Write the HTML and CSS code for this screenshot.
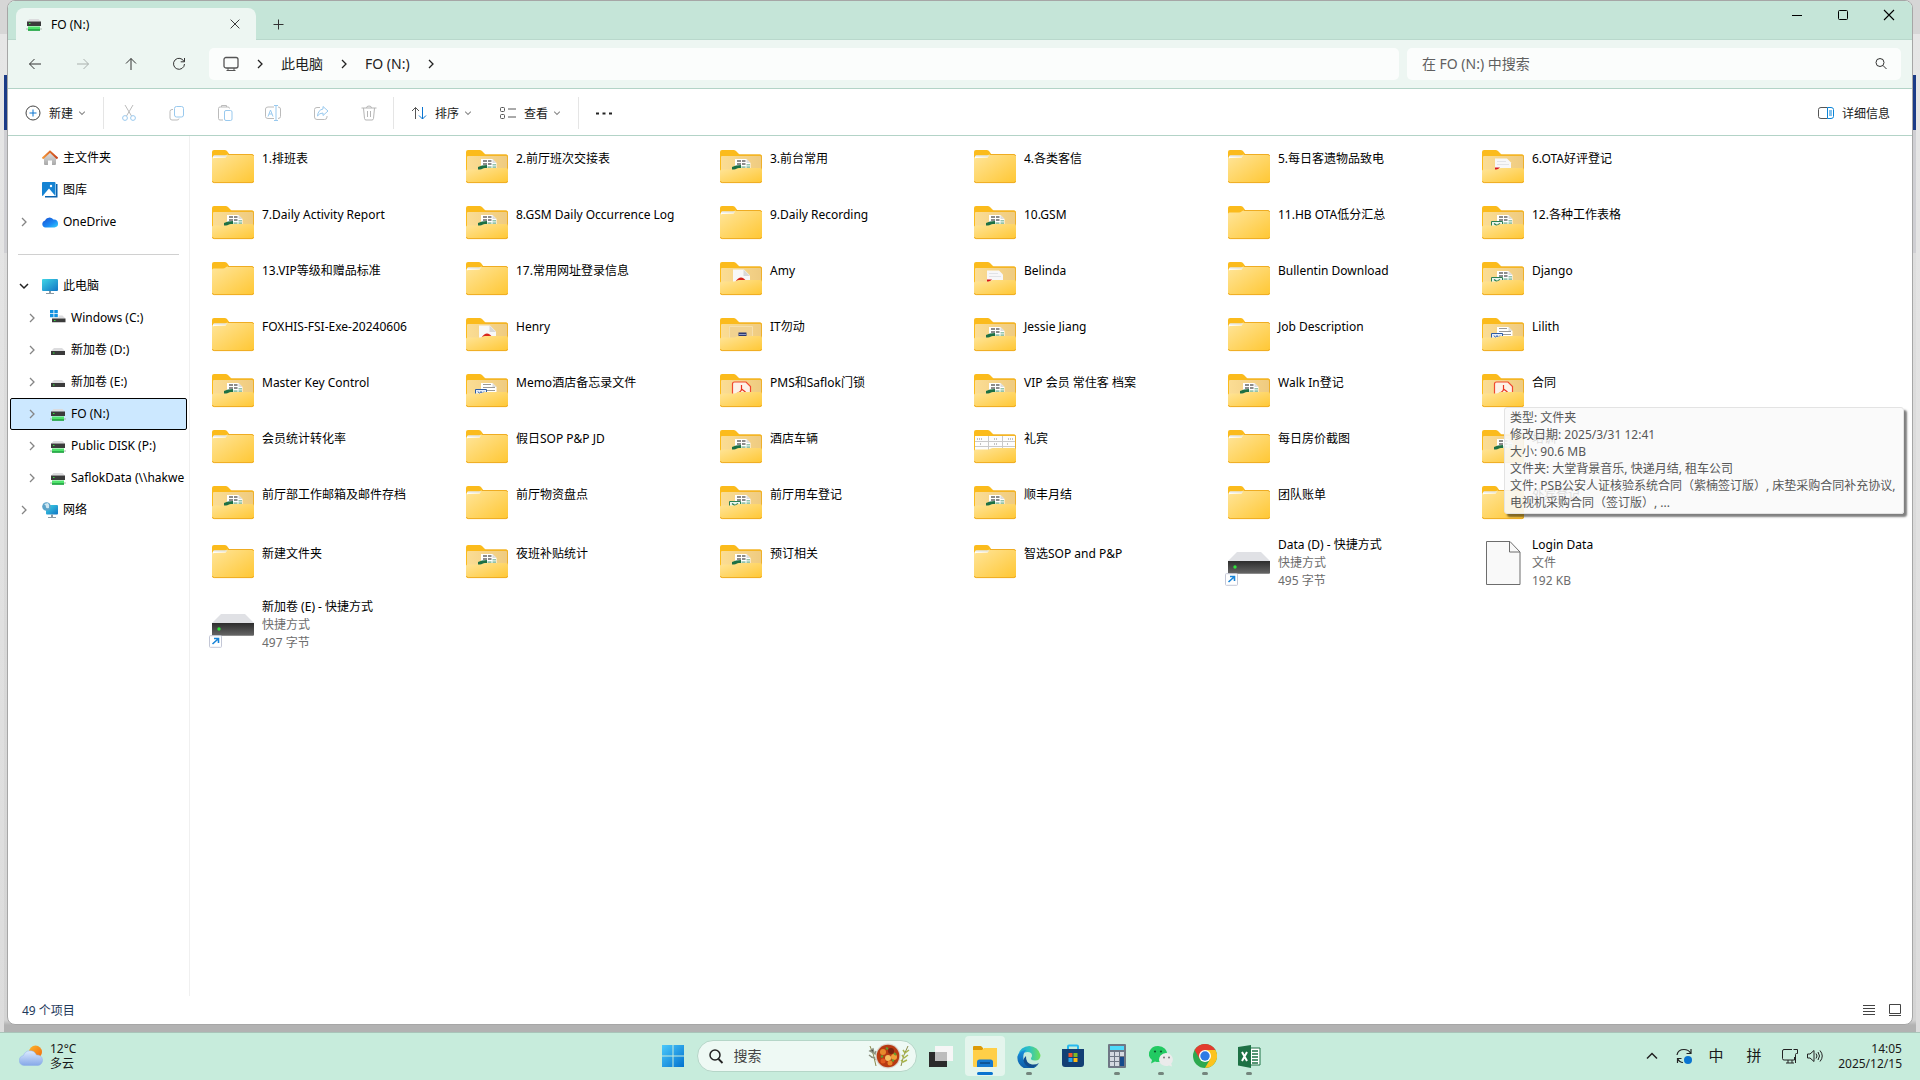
FILE: index.html
```html
<!DOCTYPE html>
<html lang="zh-CN">
<head>
    <meta charset="UTF-8">
    <meta name="viewport" content="width=device-width, initial-scale=1.0">
    <title>FO (N:)</title>
    <link rel="stylesheet" href="styles.css">
</head>
<body>

<!-- Shared icons -->
<svg class="sprite" width="0" height="0" aria-hidden="true">
    <defs>
        <linearGradient id="g-front" x1="0" y1="0" x2="1" y2="1">
            <stop offset="0" stop-color="#ffe59a"/>
            <stop offset="1" stop-color="#ffc733"/>
        </linearGradient>
        <linearGradient id="g-back" x1="0" y1="0" x2="1" y2="0">
            <stop offset="0" stop-color="#fbdd94"/>
            <stop offset="1" stop-color="#efcb80"/>
        </linearGradient>
        <linearGradient id="g-paper" x1="0" y1="0" x2="1" y2="0">
            <stop offset="0" stop-color="#ffffff"/>
            <stop offset="1" stop-color="#ffeec0"/>
        </linearGradient>
        <linearGradient id="g-drive" x1="0" y1="0" x2="0" y2="1">
            <stop offset="0" stop-color="#2d2d2d"/>
            <stop offset="1" stop-color="#666666"/>
        </linearGradient>
        <linearGradient id="g-roof" x1="0" y1="0" x2="1" y2="0">
            <stop offset="0" stop-color="#f59a3c"/>
            <stop offset="1" stop-color="#c8421c"/>
        </linearGradient>
        <linearGradient id="g-wall" x1="0" y1="0" x2="0" y2="1">
            <stop offset="0" stop-color="#e4e4e4"/>
            <stop offset="1" stop-color="#a8a8a8"/>
        </linearGradient>
        <linearGradient id="g-cloud" x1="0" y1="0" x2="1" y2="1">
            <stop offset="0" stop-color="#1a4fd0"/>
            <stop offset="0.6" stop-color="#1b8bf5"/>
            <stop offset="1" stop-color="#35d2fb"/>
        </linearGradient>
        <linearGradient id="g-screen" x1="0" y1="0" x2="1" y2="1">
            <stop offset="0" stop-color="#3fd6e6"/>
            <stop offset="1" stop-color="#1174c4"/>
        </linearGradient>
        <linearGradient id="g-win" x1="0" y1="0" x2="1" y2="1">
            <stop offset="0" stop-color="#4cc9fb"/>
            <stop offset="1" stop-color="#0272cf"/>
        </linearGradient>
        <linearGradient id="g-weather" x1="0" y1="0" x2="0" y2="1">
            <stop offset="0" stop-color="#dcebff"/>
            <stop offset="1" stop-color="#86a8e8"/>
        </linearGradient>
        <linearGradient id="g-sun" x1="0" y1="0" x2="1" y2="1">
            <stop offset="0" stop-color="#fbb62c"/>
            <stop offset="1" stop-color="#f2680d"/>
        </linearGradient>
        <linearGradient id="g-edge" x1="0" y1="0" x2="1" y2="0">
            <stop offset="0" stop-color="#1aa7e0"/>
            <stop offset="0.5" stop-color="#2fc3c0"/>
            <stop offset="1" stop-color="#6fe05a"/>
        </linearGradient>
        <linearGradient id="g-edge2" x1="0" y1="0" x2="0" y2="1">
            <stop offset="0" stop-color="#1a90dd"/>
            <stop offset="1" stop-color="#0c59a4"/>
        </linearGradient>
    </defs>

    <!-- folder parts -->
    <symbol id="folder-back" viewBox="0 0 48 48">
        <path d="M3 30V9q0-2 2-2h11.500q1.500 0 2.500 1l3.500 3.500H43q2 0 2 2V30z" fill="#fbbb1c"/>
        <path d="M4 30V14q0-1 1-1h38q1 0 1 1v16z" fill="url(#g-back)"/>
        <path d="M22 12h21q1.500 0 1.500 1.500V28" fill="none" stroke="#eeb02c"/>
    </symbol>
    <symbol id="folder-front" viewBox="0 0 48 48">
        <path d="M3 28q0-1.500 1.500-1.500H17q1.500 0 2.500-.8t2.500-.8h21q2 0 2 2V38q0 2-2 2H5q-2 0-2-2z" fill="url(#g-front)"/>
        <path d="M3.500 38q0 1.600 1.700 1.600h37.600q1.700 0 1.700-1.600" fill="none" stroke="#efac22"/>
    </symbol>
    <symbol id="f-empty" viewBox="0 0 48 48">
        <path d="M3 16V9q0-2 2-2h10.500q1.500 0 2.500 1l2.500 3.500L17 14z" fill="#fbbb1c"/>
        <path d="M3 15q0-1.500 1.500-1.500H14q1.500 0 2.500-1t2.500-1h24q2 0 2 2V38q0 2-2 2H5q-2 0-2-2z" fill="url(#g-front)"/>
        <path d="M19 11.500h24q1.500 0 1.500 1.500M3.500 38q0 1.600 1.700 1.600h37.600q1.700 0 1.700-1.600" fill="none" stroke="#efac22"/>
    </symbol>
    <symbol id="f-plain" viewBox="0 0 48 48">
        <use href="#f-empty"/>
        <path d="M4 14q0-1.500 1.500-1.500H18l-1.500 2.500H5q-1 0-1 1z" fill="url(#g-paper)"/>
        <path d="M4.500 13h13" stroke="#d8e2ee"/>
    </symbol>
    <symbol id="sheet" viewBox="0 0 48 48">
        <path d="M18 16h11.500l4 4V28H18z" fill="#fff"/>
        <path d="M29.500 16v4h4z" fill="#ddd"/>
        <path d="M20 17h4v2h-4zM25 17h3.500v2H25zM20 20h4v2h-4zM25 20h3.500v2H25z" fill="#8c8c8c"/>
        <path d="M29.500 21H33v1.500h-3.500zM24.500 23.200h4v2h-4zM29.500 23.200H33v2h-3.500z" fill="#93c3ab"/>
    </symbol>
    <symbol id="f-xls" viewBox="0 0 48 48">
        <use href="#folder-back"/><use href="#sheet"/>
        <path d="M15 24l4-1.500 5-.5v6h-9z" fill="#1d7044"/>
        <use href="#folder-front"/>
    </symbol>
    <symbol id="f-sheet" viewBox="0 0 48 48">
        <use href="#folder-back"/><use href="#sheet"/>
        <path d="M12.500 22.500h11v6h-11z" fill="#e9f5ee" stroke="#2b8054"/>
        <path d="M15 24.500l3 2 3-2" fill="none" stroke="#2b8054" stroke-width="1.500"/>
        <use href="#folder-front"/>
    </symbol>
    <symbol id="f-doc" viewBox="0 0 48 48">
        <use href="#folder-back"/>
        <path d="M18 16h11.500l4 4V28H18z" fill="#fff"/>
        <path d="M29.500 16v4h4z" fill="#ddd"/>
        <path d="M20 17.500h8M20 20.500h12M24 23.500h8" stroke="#9a9a9a"/>
        <path d="M12.500 22.500h11v6h-11z" fill="#e6eef9" stroke="#2c5ba6"/>
        <path d="M15 24.500l1.500 2 1.500-2 1.500 2 1.500-2" fill="none" stroke="#2c5ba6"/>
        <use href="#folder-front"/>
    </symbol>
    <symbol id="f-pdf" viewBox="0 0 48 48">
        <use href="#folder-back"/>
        <path d="M16 14.500h11l6 6V28H16z" fill="#f8f8f8"/>
        <path d="M26.500 14.500V21H33z" fill="#d8d8d8"/>
        <path d="M18.500 26.500q5.500-8 11 0z" fill="#d8261c"/>
        <use href="#folder-front"/>
    </symbol>
    <symbol id="f-page" viewBox="0 0 48 48">
        <use href="#folder-back"/>
        <path d="M16 15.500h12l4 4V28H16z" fill="#f7f7f9"/>
        <path d="M18 18.500h9M18 21.500h12" stroke="#e1e3e8"/>
        <path d="M16 24.500h5l-3 3h-2z" fill="#d8141c"/>
        <use href="#folder-front"/>
    </symbol>
    <symbol id="f-acrobat" viewBox="0 0 48 48">
        <use href="#folder-back"/>
        <path d="M15.500 30V17q0-2 2-2H29l4.500 4.500V30z" fill="#fdf1e8" stroke="#f0492f" stroke-width="1.200"/>
        <path d="M24.500 18v4q0 2.500-4 4M24.500 22l4 3" fill="none" stroke="#e8331d" stroke-width="1.200"/>
        <use href="#folder-front"/>
    </symbol>
    <symbol id="f-app" viewBox="0 0 48 48">
        <use href="#folder-back"/>
        <path d="M12.500 15.500h23V28h-23z" fill="#f1d290" stroke="#f6dfab"/>
        <path d="M21.500 21.500h8v5h-8z" fill="#2b3a72"/>
        <path d="M22 23.500h7" stroke="#8f9ac4"/>
        <use href="#folder-front"/>
    </symbol>
    <symbol id="f-table" viewBox="0 0 48 48">
        <use href="#folder-back"/>
        <path d="M4 13h40v16H4z" fill="#fdfdfd"/>
        <path d="M4 18.500h40M4 23.500h40M17.500 13v14M31.500 13v12" stroke="#c9c9c9"/>
        <path d="M6 16h5M23 16h3M37 16h5M9 21h2M23 21h4M36 21h2" stroke="#888" stroke-dasharray="1 1"/>
        <use href="#folder-front"/>
    </symbol>
    <symbol id="file-blank" viewBox="0 0 48 48">
        <path d="M7.500 3.500H31L41 14v32.500H7.500z" fill="#f9f9f9" stroke="#6d6d6d"/>
        <path d="M30.500 3.500V14H41" fill="none" stroke="#6d6d6d"/>
    </symbol>
    <symbol id="drive-link" viewBox="0 0 48 48">
        <path d="M12 14h24l9 9H3z" fill="#e0e1e5"/>
        <path d="M3 23h42v12q0 .8-1 .8H4q-1 0-1-.8z" fill="url(#g-drive)"/>
        <circle cx="10" cy="29" r="1.700" fill="#2fe23a"/>
        <path d="M.5 36.500q0-.8.800-.8h10.400q.8 0 .8.800v10q0 .8-.8.800H1.300q-.8 0-.8-.8z" fill="#fff" stroke="#c3c7d6"/>
        <path d="M3.500 44l5.500-5M5 38.500h4.500V43" fill="none" stroke="#1784d8" stroke-width="1.600"/>
    </symbol>

    <!-- small drives -->
    <symbol id="drive" viewBox="0 0 16 16">
        <path d="M4 6h8l3 3H1z" fill="#dcdcde"/>
        <path d="M1 9h14v4H1z" fill="#3b3b3b"/>
        <path d="M3 11h1.500" stroke="#33e23d"/>
    </symbol>
    <symbol id="drive-net" viewBox="0 0 16 16">
        <path d="M3.500 3h9l2.500 2.500H1z" fill="#dcdcde"/>
        <path d="M1 5.500h14v4.500H1z" fill="#3b3b3b"/>
        <path d="M3 7.500h1.500" stroke="#33e23d"/>
        <path d="M2 10.500h12v4H2z" fill="#4fe36b"/>
        <path d="M2 14h12" stroke="#1f9c40" stroke-width="1.500"/>
        <path d="M0 13h2M14 13h2" stroke="#a9b8ad"/>
    </symbol>
    <symbol id="drive-win" viewBox="0 0 16 16">
        <path d="M0 0h3.500v3.300H0zM4.300 0h3.500v3.300H4.300zM0 4h3.500v3.300H0zM4.300 4h3.500v3.300H4.300z" fill="#1090e0"/>
        <path d="M8.500 5.500h4l3 3H2l1-1h5.500z" fill="#dcdcde"/>
        <path d="M2 8.500h13.500v3.800H2z" fill="#3b3b3b"/>
        <path d="M4 10.500h1.500" stroke="#33e23d"/>
    </symbol>

    <!-- chevrons -->
    <symbol id="chev-right" viewBox="0 0 14 14">
        <path d="M5 3l4 4-4 4" fill="none" stroke="currentColor" stroke-width="1.300"/>
    </symbol>
    <symbol id="chev-down" viewBox="0 0 14 14">
        <path d="M3 5l4 4 4-4" fill="none" stroke="currentColor" stroke-width="1.500"/>
    </symbol>
    <symbol id="cross" viewBox="0 0 16 16">
        <path d="M3 3l10 10M13 3L3 13" fill="none" stroke="currentColor" stroke-width="1.100"/>
    </symbol>
    <symbol id="magnifier" viewBox="0 0 16 16">
        <circle cx="7" cy="6.500" r="4" fill="none" stroke="currentColor"/>
        <path d="M10 9.500l3.500 3.500" stroke="currentColor"/>
    </symbol>
</svg>

<div class="desktop">
    <main class="window">

        <!-- Tabs -->
        <header class="titlebar">
            <div class="tab">
                <svg class="icon16"><use href="#drive-net"/></svg>
                <span class="tab-title">FO (N:)</span>
                <button class="icon-btn" aria-label="关闭标签页"><svg class="icon14"><use href="#cross"/></svg></button>
            </div>
            <button class="icon-btn new-tab" aria-label="新建标签页">
                <svg class="icon16" viewBox="0 0 16 16"><path d="M8.500 3.500v10M3.500 8.500h10" stroke="#333"/></svg>
            </button>
            <div class="window-buttons">
                <button aria-label="最小化"><svg class="icon16" viewBox="0 0 16 16"><path d="M3 8.500h10" stroke="#000"/></svg></button>
                <button aria-label="最大化"><svg class="icon16" viewBox="0 0 16 16"><rect x="3.500" y="3.500" width="9" height="9" rx="1" fill="none" stroke="#000"/></svg></button>
                <button aria-label="关闭"><svg class="icon16"><use href="#cross"/></svg></button>
            </div>
        </header>

        <!-- Navigation -->
        <nav class="navbar">
            <button class="nav-btn" aria-label="后退"><svg class="icon16" viewBox="0 0 16 16"><path d="M14 8H2.500M7.500 3l-5 5 5 5" fill="none" stroke="#333"/></svg></button>
            <button class="nav-btn" aria-label="前进" disabled><svg class="icon16" viewBox="0 0 16 16"><path d="M2 8h11.500M8.500 3l5 5-5 5" fill="none" stroke="#a9b0ad"/></svg></button>
            <button class="nav-btn" aria-label="上移"><svg class="icon16" viewBox="0 0 16 16"><path d="M8 14V2.500M3 7.500l5-5 5 5" fill="none" stroke="#333"/></svg></button>
            <button class="nav-btn" aria-label="刷新"><svg class="icon16" viewBox="0 0 16 16"><path d="M13 5.500A5.500 5.500 0 1 0 13.500 8M13.500 2v3.800H9.700" fill="none" stroke="#333"/></svg></button>
            <div class="address">
                <svg class="icon16" viewBox="0 0 16 16"><rect x="1" y="1.500" width="14" height="10.500" rx="2" fill="none" stroke="#555" stroke-width="1.300"/><path d="M5 12v2.500M11 12v2.500M3.500 14.500h9" stroke="#555"/></svg>
                <svg class="icon14"><use href="#chev-right"/></svg>
                <button class="crumb">此电脑</button>
                <svg class="icon14"><use href="#chev-right"/></svg>
                <button class="crumb">FO (N:)</button>
                <svg class="icon14"><use href="#chev-right"/></svg>
            </div>
            <div class="search">
                <input type="text" placeholder="在 FO (N:) 中搜索" aria-label="搜索">
                <svg class="icon16"><use href="#magnifier"/></svg>
            </div>
        </nav>

        <!-- Commands -->
        <div class="toolbar">
            <button class="cmd">
                <svg class="icon16" viewBox="0 0 16 16"><circle cx="8" cy="8" r="7" fill="none" stroke="#444"/><path d="M8 4.500v7M4.500 8h7" stroke="#0a74d0"/></svg>
                新建
                <svg class="caret"><use href="#chev-down"/></svg>
            </button>
            <span class="divider"></span>
            <button class="cmd-icon" aria-label="剪切" disabled><svg class="icon16" viewBox="0 0 16 16"><path d="M4 0l6.500 11M12 0L5.500 11" fill="none" stroke="#bbb"/><circle cx="4" cy="13" r="2.400" fill="none" stroke="#99c9ee"/><circle cx="12" cy="13" r="2.400" fill="none" stroke="#99c9ee"/></svg></button>
            <button class="cmd-icon" aria-label="复制" disabled><svg class="icon16" viewBox="0 0 16 16"><path d="M4 4.500H3q-2 0-2 2V13q0 2 2 2h5q2 0 2-1.500" fill="none" stroke="#bbb"/><rect x="5.500" y="1.500" width="9" height="10.500" rx="2" fill="none" stroke="#99c9ee"/></svg></button>
            <button class="cmd-icon" aria-label="粘贴" disabled><svg class="icon16" viewBox="0 0 16 16"><path d="M6 15H3q-1.500 0-1.500-1.500v-10Q1.500 2 3 2h8q1.500 0 1.500 1.500M4.500 2V.5h5V2" fill="none" stroke="#bbb"/><rect x="7.500" y="5.500" width="7.500" height="10" rx="1.500" fill="none" stroke="#99c9ee"/></svg></button>
            <button class="cmd-icon" aria-label="重命名" disabled><svg class="icon16" viewBox="0 0 16 16"><path d="M9 2H3Q.5 2 .5 4v7.500q0 2 2.500 2h6M13 2q2.500 0 2.500 2v7.500q0 2-2.500 2" fill="none" stroke="#bbb"/><path d="M11 .5v15M9 .5h4M9 15.500h4M3 11.500L5.500 5 8 11.500M4 9h3" fill="none" stroke="#99c9ee"/></svg></button>
            <button class="cmd-icon" aria-label="共享" disabled><svg class="icon16" viewBox="0 0 16 16"><path d="M7 2.500H4q-2.500 0-2.500 2V12q0 2.500 2.500 2.500h7.500q2.500 0 2.500-2.500v-1" fill="none" stroke="#bbb"/><path d="M10 1.500L15 6l-5 4.500V8Q6.500 8 4.500 11 5 5 10 4z" fill="none" stroke="#99c9ee"/></svg></button>
            <button class="cmd-icon" aria-label="删除" disabled><svg class="icon16" viewBox="0 0 16 16"><path d="M.5 3h15M5.500 3q0-2 2.500-2t2.500 2M2.500 3l1 10.500q.2 1.500 1.500 1.500h6q1.300 0 1.500-1.500L13.500 3M6.500 6v6M9.500 6v6" fill="none" stroke="#b5b5b5"/></svg></button>
            <span class="divider"></span>
            <button class="cmd">
                <svg class="icon16" viewBox="0 0 16 16"><path d="M4.500 14V2.500M1 6l3.500-3.500L8 6" fill="none" stroke="#555"/><path d="M11.500 2v12M8 10.500l3.500 3.500 3.500-3.500" fill="none" stroke="#0a74d0"/></svg>
                排序
                <svg class="caret"><use href="#chev-down"/></svg>
            </button>
            <button class="cmd">
                <svg class="icon16" viewBox="0 0 16 16"><rect x=".5" y="2.500" width="4" height="4" rx="1" fill="none" stroke="#555"/><rect x=".5" y="9.500" width="4" height="4" rx="1" fill="none" stroke="#555"/><path d="M8 4h8M8 12h8" stroke="#555"/></svg>
                查看
                <svg class="caret"><use href="#chev-down"/></svg>
            </button>
            <span class="divider"></span>
            <button class="cmd-icon" aria-label="更多"><svg class="icon16" viewBox="0 0 16 16"><path d="M0 7.500h3v2H0zM6.500 7.500h3v2h-3zM13 7.500h3v2h-3z" fill="#222"/></svg></button>
            <button class="cmd details">
                <svg class="icon16" viewBox="0 0 16 16"><path d="M9.500 2.500H3q-2.500 0-2.500 2v7q0 2 2.500 2h6.500" fill="none" stroke="#555"/><path d="M9.500 2.500H13q2.500 0 2.500 2v7q0 2-2.500 2H9.500zM11 6h3M11 8h3M11 10h3" fill="none" stroke="#0a84d8"/></svg>
                详细信息
            </button>
        </div>

        <div class="content">
            <!-- Folder tree -->
            <aside class="sidebar">
                <a class="row" href="#"><span class="chev"></span><svg class="icon16" viewBox="0 0 16 16"><path d="M2 7l6-5.500L14 7v7q0 1-1 1h-3v-4.500H6V15H3q-1 0-1-1z" fill="url(#g-wall)"/><path d="M.5 8.500L8 1.500l7.500 7" fill="none" stroke="url(#g-roof)" stroke-width="2"/></svg>主文件夹</a>
                <a class="row" href="#"><span class="chev"></span><svg class="icon16" viewBox="0 0 16 16"><path d="M14 2h1.500v13.500H3V14h11z" fill="#0b62ae"/><rect width="13.500" height="14" rx="1" fill="#1583d3"/><path d="M1 13.500l6-7 6 7q-.5.500-1 .5H2q-.6 0-1-.5z" fill="#fff"/><circle cx="9" cy="4" r="1.200" fill="#fff"/></svg>图库</a>
                <a class="row" href="#"><svg class="chev"><use href="#chev-right"/></svg><svg class="icon16" viewBox="0 0 16 16"><path d="M3.500 13.500A3.500 3.500 0 0 1 3 6.600 5 5 0 0 1 11.500 5.500a4 4 0 0 1 1 8z" fill="url(#g-cloud)"/></svg>OneDrive</a>
                <hr class="split">
                <a class="row open" href="#"><svg class="chev"><use href="#chev-down"/></svg><svg class="icon16" viewBox="0 0 16 16"><rect y="1" width="16" height="12" rx="1" fill="url(#g-screen)"/><path d="M7 13h2v2H7zM4 15h8v1H4z" fill="#8a9aa5"/></svg>此电脑</a>
                <a class="row sub" href="#"><svg class="chev"><use href="#chev-right"/></svg><svg class="icon16"><use href="#drive-win"/></svg>Windows (C:)</a>
                <a class="row sub" href="#"><svg class="chev"><use href="#chev-right"/></svg><svg class="icon16"><use href="#drive"/></svg>新加卷 (D:)</a>
                <a class="row sub" href="#"><svg class="chev"><use href="#chev-right"/></svg><svg class="icon16"><use href="#drive"/></svg>新加卷 (E:)</a>
                <a class="row sub selected" href="#"><svg class="chev"><use href="#chev-right"/></svg><svg class="icon16"><use href="#drive-net"/></svg>FO (N:)</a>
                <a class="row sub" href="#"><svg class="chev"><use href="#chev-right"/></svg><svg class="icon16"><use href="#drive-net"/></svg>Public DISK (P:)</a>
                <a class="row sub" href="#"><svg class="chev"><use href="#chev-right"/></svg><svg class="icon16"><use href="#drive-net"/></svg>SaflokData (\\hakwe</a>
                <a class="row" href="#"><svg class="chev"><use href="#chev-right"/></svg><svg class="icon16" viewBox="0 0 16 16"><rect x="4" y="3" width="12" height="9.500" rx="1" fill="url(#g-screen)"/><path d="M9 12.500h2V15H9zM6 15h8v1H6z" fill="#8a9aa5"/><circle cx="4.500" cy="4.500" r="4.300" fill="#5ba3c9"/><path d="M2 2q2 1 2 3t3 1q1-3-1-5z" fill="#cfe6f0"/></svg>网络</a>
            </aside>

            <!-- Files -->
            <ul class="files">
                <li class="tile"><svg><use href="#f-plain"/></svg><div class="info"><span>1.排班表</span></div></li>
                <li class="tile"><svg><use href="#f-xls"/></svg><div class="info"><span>2.前厅班次交接表</span></div></li>
                <li class="tile"><svg><use href="#f-xls"/></svg><div class="info"><span>3.前台常用</span></div></li>
                <li class="tile"><svg><use href="#f-plain"/></svg><div class="info"><span>4.各类客信</span></div></li>
                <li class="tile"><svg><use href="#f-plain"/></svg><div class="info"><span>5.每日客遗物品致电</span></div></li>
                <li class="tile"><svg><use href="#f-page"/></svg><div class="info"><span>6.OTA好评登记</span></div></li>

                <li class="tile"><svg><use href="#f-xls"/></svg><div class="info"><span>7.Daily Activity Report</span></div></li>
                <li class="tile"><svg><use href="#f-xls"/></svg><div class="info"><span>8.GSM Daily Occurrence Log</span></div></li>
                <li class="tile"><svg><use href="#f-plain"/></svg><div class="info"><span>9.Daily Recording</span></div></li>
                <li class="tile"><svg><use href="#f-xls"/></svg><div class="info"><span>10.GSM</span></div></li>
                <li class="tile"><svg><use href="#f-empty"/></svg><div class="info"><span>11.HB OTA低分汇总</span></div></li>
                <li class="tile"><svg><use href="#f-sheet"/></svg><div class="info"><span>12.各种工作表格</span></div></li>

                <li class="tile"><svg><use href="#f-empty"/></svg><div class="info"><span>13.VIP等级和赠品标准</span></div></li>
                <li class="tile"><svg><use href="#f-plain"/></svg><div class="info"><span>17.常用网址登录信息</span></div></li>
                <li class="tile"><svg><use href="#f-pdf"/></svg><div class="info"><span>Amy</span></div></li>
                <li class="tile"><svg><use href="#f-page"/></svg><div class="info"><span>Belinda</span></div></li>
                <li class="tile"><svg><use href="#f-plain"/></svg><div class="info"><span>Bullentin Download</span></div></li>
                <li class="tile"><svg><use href="#f-sheet"/></svg><div class="info"><span>Django</span></div></li>

                <li class="tile"><svg><use href="#f-plain"/></svg><div class="info"><span>FOXHIS-FSI-Exe-20240606</span></div></li>
                <li class="tile"><svg><use href="#f-pdf"/></svg><div class="info"><span>Henry</span></div></li>
                <li class="tile"><svg><use href="#f-app"/></svg><div class="info"><span>IT勿动</span></div></li>
                <li class="tile"><svg><use href="#f-xls"/></svg><div class="info"><span>Jessie Jiang</span></div></li>
                <li class="tile"><svg><use href="#f-plain"/></svg><div class="info"><span>Job Description</span></div></li>
                <li class="tile"><svg><use href="#f-doc"/></svg><div class="info"><span>Lilith</span></div></li>

                <li class="tile"><svg><use href="#f-xls"/></svg><div class="info"><span>Master Key Control</span></div></li>
                <li class="tile"><svg><use href="#f-doc"/></svg><div class="info"><span>Memo酒店备忘录文件</span></div></li>
                <li class="tile"><svg><use href="#f-acrobat"/></svg><div class="info"><span>PMS和Saflok门锁</span></div></li>
                <li class="tile"><svg><use href="#f-xls"/></svg><div class="info"><span>VIP 会员 常住客 档案</span></div></li>
                <li class="tile"><svg><use href="#f-xls"/></svg><div class="info"><span>Walk In登记</span></div></li>
                <li class="tile hovered"><svg><use href="#f-acrobat"/></svg><div class="info"><span>合同</span></div>
                    <div class="tooltip" role="tooltip">
                        <div>类型: 文件夹</div>
                        <div>修改日期: 2025/3/31 12:41</div>
                        <div>大小: 90.6 MB</div>
                        <div>文件夹: 大堂背景音乐, 快递月结, 租车公司</div>
                        <div>文件: PSB公安人证核验系统合同（紫楠签订版）, 床垫采购合同补充协议,</div>
                        <div>电视机采购合同（签订版）, ...</div>
                    </div>
                </li>

                <li class="tile"><svg><use href="#f-plain"/></svg><div class="info"><span>会员统计转化率</span></div></li>
                <li class="tile"><svg><use href="#f-plain"/></svg><div class="info"><span>假日SOP P&amp;P JD</span></div></li>
                <li class="tile"><svg><use href="#f-xls"/></svg><div class="info"><span>酒店车辆</span></div></li>
                <li class="tile"><svg><use href="#f-table"/></svg><div class="info"><span>礼宾</span></div></li>
                <li class="tile"><svg><use href="#f-plain"/></svg><div class="info"><span>每日房价截图</span></div></li>
                <li class="tile"><svg><use href="#f-xls"/></svg><div class="info"><span>培训</span></div></li>

                <li class="tile"><svg><use href="#f-xls"/></svg><div class="info"><span>前厅部工作邮箱及邮件存档</span></div></li>
                <li class="tile"><svg><use href="#f-plain"/></svg><div class="info"><span>前厅物资盘点</span></div></li>
                <li class="tile"><svg><use href="#f-sheet"/></svg><div class="info"><span>前厅用车登记</span></div></li>
                <li class="tile"><svg><use href="#f-xls"/></svg><div class="info"><span>顺丰月结</span></div></li>
                <li class="tile"><svg><use href="#f-plain"/></svg><div class="info"><span>团队账单</span></div></li>
                <li class="tile"><svg><use href="#f-plain"/></svg><div class="info"><span>外宾登记</span></div></li>

                <li class="tile"><svg><use href="#f-plain"/></svg><div class="info"><span>新建文件夹</span></div></li>
                <li class="tile"><svg><use href="#f-xls"/></svg><div class="info"><span>夜班补贴统计</span></div></li>
                <li class="tile"><svg><use href="#f-xls"/></svg><div class="info"><span>预订相关</span></div></li>
                <li class="tile"><svg><use href="#f-plain"/></svg><div class="info"><span>智选SOP and P&amp;P</span></div></li>
                <li class="tile"><svg><use href="#drive-link"/></svg><div class="info"><span>Data (D) - 快捷方式</span><small>快捷方式</small><small>495 字节</small></div></li>
                <li class="tile"><svg><use href="#file-blank"/></svg><div class="info"><span>Login Data</span><small>文件</small><small>192 KB</small></div></li>

                <li class="tile"><svg><use href="#drive-link"/></svg><div class="info"><span>新加卷 (E) - 快捷方式</span><small>快捷方式</small><small>497 字节</small></div></li>
            </ul>
        </div>

        <footer class="statusbar">
            <span class="count">49 个项目</span>
            <button class="view-btn" aria-label="详细信息视图"><svg class="icon14" viewBox="0 0 14 14"><path d="M1 2.500h12M1 5.500h12M1 8.500h12M1 11.500h12" stroke="#444"/></svg></button>
            <button class="view-btn" aria-label="大图标视图"><svg class="icon14" viewBox="0 0 14 14"><path d="M1.500 1.500h11v9h-11zM1 12.500h12" fill="none" stroke="#444"/></svg></button>
        </footer>
    </main>
</div>

<!-- Taskbar -->
<div class="taskbar">
    <button class="weather">
        <svg class="icon24" viewBox="0 0 24 24"><circle cx="16.500" cy="8" r="6.500" fill="url(#g-sun)"/><path d="M5 21.500a5 5 0 0 1-.6-9.900A7 7 0 0 1 17.500 11 5.300 5.300 0 0 1 19 21.500z" fill="url(#g-weather)" stroke="#8fb0ea" stroke-width=".5"/></svg>
        <span>12°C<br>多云</span>
    </button>

    <div class="apps">
        <button class="app" aria-label="开始"><svg class="icon24" viewBox="0 0 24 24"><path d="M1 1h10.500v10.500H1zM12.500 1H23v10.500H12.500zM1 12.500h10.500V23H1zM12.500 12.500H23V23H12.500z" fill="url(#g-win)"/></svg></button>
        <label class="task-search">
            <svg class="icon16" viewBox="0 0 16 16"><circle cx="7" cy="7" r="5" fill="none" stroke="#222" stroke-width="1.500"/><path d="M10.500 11l4 4" stroke="#222" stroke-width="1.800"/></svg>
            <input type="text" placeholder="搜索">
            <svg class="dish" viewBox="0 0 44 26">
                <path d="M3 3q4 8 6 20M41 3q-5 9-7 20" fill="none" stroke="#8a8a4c"/>
                <path d="M3 8l4 2-1-4zM4 14l4 1M9 8l-1 4M2 12l4 3M10 13l-1 4" stroke="#8b9080" stroke-width="1.500"/>
                <path d="M36 7l2 3 4-3M35 12l2 3 4-3M34 17l2 2 4-2" fill="none" stroke="#a9b54d" stroke-width="1.500"/>
                <circle cx="21" cy="13" r="12.500" fill="#d9d4cc"/><circle cx="21" cy="13" r="11.300" fill="#b83a12"/>
                <circle cx="16" cy="9" r="3" fill="#e8892b"/><circle cx="24" cy="8" r="3" fill="#7a2410"/><circle cx="27" cy="14" r="3" fill="#f0a03a"/><circle cx="21" cy="15" r="3" fill="#f4bd62"/><circle cx="16" cy="18" r="2.500" fill="#e05a20"/><circle cx="23" cy="20" r="2.500" fill="#e8892b"/>
                <path d="M19 5l2 1M27 10l2 2M14 14l2-1M25 17l2 1" stroke="#62a030" stroke-width="2"/>
            </svg>
        </label>
        <button class="app" aria-label="任务视图"><svg class="icon24" viewBox="0 0 24 24"><path d="M0 8h18v15H0z" fill="#2b2b2b"/><path d="M6 2h18v15H6z" fill="#f6f6f6"/><path d="M6 8h12v9H6z" fill="#bdbdbd"/></svg></button>
        <button class="app active" aria-label="文件资源管理器"><svg class="icon24" viewBox="0 0 24 24"><path d="M0 3q0-1 1-1h7l2 2v4H0z" fill="#dd9a06"/><path d="M0 6h9l2-2h13v18q0 1-1 1H1q-1 0-1-1z" fill="#ffcf48"/><path d="M4 23v-5q0-2.500 2.500-2.500h11q2.500 0 2.500 2.500v5z" fill="#1479cf"/><path d="M7 18h10v2H7z" fill="#0b5597"/></svg></button>
        <button class="app running" aria-label="Edge"><svg class="icon24" viewBox="0 0 24 24"><path d="M1 11A11.500 11.500 0 0 1 23.500 11q0 5.500-5.500 5.500-4.500 0-4-2.500 1-1 1-2.500 0-3.500-4.500-3.500-6 0-9.500 6z" fill="url(#g-edge)"/><path d="M.5 12q3-6 9-6-4 3-3 9 2 7 9 7.500 4 0 6-2.500A11.500 11.500 0 0 1 .5 12z" fill="url(#g-edge2)"/><path d="M9 12q-.5 7 6 8.500 4 .5 7-1.500-3 4.500-8.500 4.500-6-1.500-7-7Q6.500 14 9 12z" fill="#124d8d"/></svg></button>
        <button class="app" aria-label="Microsoft Store"><svg class="icon24" viewBox="0 0 24 24"><path d="M7 6V2.500Q7 1.500 8 1.500h8q1 0 1 1V6" fill="none" stroke="#27b9ef" stroke-width="2"/><path d="M1 5h22v15q0 3-3 3H4q-3 0-3-3z" fill="#123f74"/><path d="M7.500 9h4v4h-4z" fill="#f0542a"/><path d="M12.500 9h4v4h-4z" fill="#7fba25"/><path d="M7.500 14h4v4h-4z" fill="#26a5ee"/><path d="M12.500 14h4v4h-4z" fill="#fdb913"/></svg></button>
        <button class="app running" aria-label="计算器"><svg class="icon24" viewBox="0 0 24 24"><rect x="3" width="18" height="24" rx="1" fill="#6f7785"/><path d="M5 2h14v4H5z" fill="#4edafa"/><path d="M5 8h4v4H5zM10 8h4v4h-4zM15 8h4v4h-4zM5 13h4v4H5zM10 13h4v4h-4zM5 18h4v4H5zM10 18h4v4h-4z" fill="#d4d9e1"/><path d="M15 13h4v9h-4z" fill="#164a8c"/></svg></button>
        <button class="app running" aria-label="微信"><svg class="icon24" viewBox="0 0 24 24"><path d="M9 2a9 8 0 0 0-6 14l-1 3.500 4-2A9 8 0 1 0 9 2z" fill="#22ca62"/><circle cx="6" cy="7.500" r="1.100" fill="#0a5a2b"/><circle cx="12" cy="7.500" r="1.100" fill="#0a5a2b"/><path d="M17 9a7 6.500 0 1 0 3 12.400l3 1.200-.8-3A7 6.500 0 0 0 17 9z" fill="#ebebeb"/><circle cx="15" cy="13.500" r="1" fill="#777"/><circle cx="20" cy="13.500" r="1" fill="#777"/></svg></button>
        <button class="app running" aria-label="Chrome"><svg class="icon24" viewBox="0 0 24 24"><circle cx="12" cy="12" r="12" fill="#2da94f"/><path d="M22.400 6A12 12 0 0 1 12 24l5.200-9L12 6z" fill="#fcc31e"/><path d="M1.600 6A12 12 0 0 1 22.400 6H12l-5.200 9z" fill="#e33b2e"/><circle cx="12" cy="12" r="6" fill="#fff"/><circle cx="12" cy="12" r="4.700" fill="#2c7be5"/></svg></button>
        <button class="app running" aria-label="Excel"><svg class="icon24" viewBox="0 0 24 24"><path d="M12 4h11v17H12z" fill="#fff" stroke="#1e7145"/><path d="M15 7h6M15 10h6M15 13h6M15 16h6M15 19h6" stroke="#1e7145" stroke-width="1.500"/><path d="M1 3l13-2v23L1 21.500z" fill="#1e7145"/><path d="M5 8l5 9M10 8l-5 9" stroke="#fff" stroke-width="2"/></svg></button>
    </div>

    <div class="tray">
        <button class="tray-btn" aria-label="显示隐藏的图标"><svg class="icon16" viewBox="0 0 16 16"><path d="M3 10.500l5-5 5 5" fill="none" stroke="#222" stroke-width="1.500"/></svg></button>
        <button class="tray-btn" aria-label="更新"><svg class="icon16" viewBox="0 0 16 16"><path d="M1 7q1-5.500 7-5.500 4.500 0 6.500 3.500M15 1v4.500h-4.500M7 14.500q-3.500 0-5.500-4M5.500 10.500H1.500v4.500" fill="none" stroke="#222" stroke-width="1.200"/><circle cx="12" cy="12" r="4" fill="#0a74d0"/></svg></button>
        <button class="tray-btn ime">中</button>
        <button class="tray-btn ime wide">拼</button>
        <button class="tray-btn status-icons" aria-label="网络和音量">
            <svg class="icon16" viewBox="0 0 16 16"><path d="M10 1.500H2Q.5 1.500.5 3v7.500Q.5 12 2 12h10.500V9M4 15h8M6 12v3M10 12v3M11.500 1.500h4v4h-1q-1 0-1 1V15" fill="none" stroke="#222"/></svg>
            <svg class="icon16" viewBox="0 0 16 16"><path d="M.5 6v4h2.500l4 3.500v-11L3 6zM9 5.500q2 2.500 0 5M11 4q3 4 0 8M13 2.500q4.500 5.500 0 11" fill="none" stroke="#222"/></svg>
        </button>
        <button class="clock">14:05<br>2025/12/15</button>
    </div>
</div>

</body>
</html>
```
FILE: styles.css
```css
* {
    box-sizing: border-box;
}
body {
    display: flex;
    flex-direction: column;
    height: 100vh;
    margin: 0;
    overflow: hidden;
    font-family: "Noto Sans", "Noto Sans CJK SC", sans-serif;
    font-size: 12px;
    color: #000;
}
button {
    display: flex;
    align-items: center;
    justify-content: center;
    padding: 0;
    border: none;
    background: none;
    font: inherit;
    color: inherit;
}
input {
    min-width: 0;
    padding: 0;
    border: none;
    outline: none;
    background: none;
    font: inherit;
}
svg {
    flex-shrink: 0;
}
.sprite {
    position: absolute;
}
.icon14 { width: 14px; height: 14px; }
.icon16 { width: 16px; height: 16px; }
.icon24 { width: 24px; height: 24px; }

/* Desktop behind the window */
.desktop {
    display: flex;
    flex: 1;
    min-height: 0;
    padding: 0 7px 7px;
    background:
        linear-gradient(#d6d6d6 34px, #e6e6e6 34px, #dcdcdc 100%) left / 4px 100% no-repeat,
        linear-gradient(#d6d6d6 34px, #e6e6e6 34px, #dcdcdc 100%) right / 4px 100% no-repeat,
        linear-gradient(#d6d6d6 34px, #e6e6e6 34px, #e6e6e6 75px, #1b3b87 75px, #1b3b87 130px, #cfcfd3 130px, #cfcfd3 253px, #dedede 253px, #d4d4d4 calc(100% - 12px), #b2b2b2 calc(100% - 7px));
}

/* Window */
.window {
    display: flex;
    flex: 1;
    flex-direction: column;
    min-width: 0;
    border: 1px solid #a6a6a6;
    border-radius: 8px;
    background-color: #fff;
    overflow: hidden;
}
.titlebar {
    display: flex;
    height: 39px;
    padding-left: 8px;
    border-bottom: 1px solid #b9d8cc;
    background-color: #c5e5d8;
}
.tab {
    display: flex;
    align-items: center;
    width: 240px;
    height: 32px;
    margin-top: 7px;
    padding: 0 14px 0 10px;
    border-radius: 8px 8px 0 0;
    background-color: #edf6f2;
}
.tab-title {
    flex: 1;
    padding-left: 9px;
}
.icon-btn {
    color: #333;
}
.new-tab {
    width: 32px;
    margin: 7px 0 0 6px;
}
.window-buttons {
    display: flex;
    margin-left: auto;
}
.window-buttons button {
    width: 46px;
    height: 28px;
}

/* Navigation row */
.navbar {
    display: flex;
    align-items: center;
    gap: 8px;
    height: 49px;
    padding: 0 11px 0 7px;
    border-bottom: 1px solid #b3d3c7;
    background-color: #edf6f2;
    font-size: 14px;
    line-height: 18px;
}
.nav-btn {
    width: 40px;
    height: 32px;
}
.address {
    display: flex;
    flex: 1;
    align-items: center;
    gap: 14px;
    height: 32px;
    margin-left: 2px;
    padding-left: 14px;
    border-radius: 5px;
    background-color: #fbfdfc;
    color: #222;
}
.search {
    display: flex;
    align-items: center;
    width: 26.2%;
    height: 32px;
    padding: 0 12px 0 15px;
    border-radius: 5px;
    background-color: #fbfdfc;
    color: #333;
}
.search input {
    flex: 1;
}
.search input::placeholder {
    color: #606060;
    opacity: 1;
}

/* Command bar */
.toolbar {
    display: flex;
    align-items: center;
    height: 47px;
    padding: 1px 16px 0 17px;
    border-bottom: 1px solid #b3d3c7;
}
.cmd {
    gap: 8px;
    height: 32px;
    margin-right: 16px;
    color: #1a1a1a;
}
.cmd + .cmd {
    margin-left: 11px;
}
.caret {
    width: 10px;
    height: 10px;
    margin-left: -4px;
    color: #8a8a8a;
}
.divider {
    width: 1px;
    height: 32px;
    background-color: #e5e5e5;
}
.cmd-icon {
    width: 48px;
    height: 32px;
}
.divider + .cmd {
    margin-left: 17px;
}
.divider + .cmd-icon {
    margin-left: 1px;
}
.details {
    margin-left: auto;
    margin-right: 6px;
}

/* Folder tree */
.content {
    display: flex;
    flex: 1;
    min-height: 0;
}
.sidebar {
    flex-shrink: 0;
    width: 182px;
    padding: 6px 2px 0;
    border-right: 1px solid #f0f0f0;
    line-height: 16px;
}
.row {
    display: flex;
    align-items: center;
    height: 32px;
    padding-left: 6px;
    border: 1px solid transparent;
    border-radius: 2px;
    color: #000;
    text-decoration: none;
    white-space: nowrap;
    overflow: hidden;
}
.row.sub {
    padding-left: 14px;
}
.row.selected {
    border-color: #000;
    background-color: #cce8ff;
}
.row .chev {
    width: 14px;
    height: 14px;
    margin-right: 11px;
    color: #858585;
}
.row.open .chev {
    color: #222;
}
.row .icon16 {
    margin-right: 5px;
}
.split {
    margin: 16px 8px 15px;
    border: none;
    border-top: 1px solid #d0d0d0;
}

/* File tiles */
.files {
    display: grid;
    flex: 1;
    grid-template-columns: repeat(auto-fill, 254px);
    align-content: start;
    margin: 0;
    padding: 3px 0 0 15px;
    list-style: none;
}
.tile {
    display: flex;
    align-items: center;
    gap: 5px;
    min-height: 56px;
    padding: 4px;
}
.tile > svg {
    width: 48px;
    height: 48px;
}
.info {
    display: flex;
    flex-direction: column;
    min-height: 38px;
    padding-top: 2px;
    line-height: 18px;
    white-space: nowrap;
}
.info small {
    font-size: 12px;
    color: #6d6d6d;
}
/* three-line tiles */
.info:has(small) {
    padding: 1px 0;
    margin-bottom: -2px;
}
.tile:has(small) {
    min-height: 62px;
}
.hovered {
    position: relative;
}
.tooltip {
    position: absolute;
    z-index: 10;
    top: 44px;
    left: 29px;
    width: 400px;
    padding: 1px 5px 2px;
    border: 1px solid #e3e3e3;
    border-radius: 3px;
    background-color: rgba(249, 249, 249, 0.88);
    box-shadow: 3px 3px 2px rgba(0, 0, 0, 0.5);
    line-height: 17px;
    white-space: nowrap;
    color: #575757;
}

/* Status bar */
.statusbar {
    display: flex;
    align-items: center;
    height: 28px;
    padding: 0 9px 0 14px;
}
.count {
    flex: 1;
    color: #1e395b;
}
.view-btn {
    width: 26px;
    height: 24px;
}
.view-btn:last-child {
    margin-right: -5px;
}

/* Taskbar */
.taskbar {
    display: grid;
    grid-template-columns: 1fr auto 1fr;
    align-items: center;
    height: 48px;
    padding: 0 18px 2px 19px;
    border-top: 1px solid #a9c4b9;
    background-color: #c7ecdc;
    color: #1a1a1a;
    line-height: 15px;
}
.weather {
    gap: 7px;
    justify-self: start;
    text-align: left;
}
.apps {
    display: flex;
    align-items: center;
    gap: 4px;
}
.app {
    position: relative;
    width: 40px;
    height: 40px;
    border-radius: 4px;
}
.app.active {
    background-color: #e4f5ed;
}
.app.active::after,
.app.running::after {
    content: "";
    position: absolute;
    bottom: 1px;
    left: 50%;
    width: 6px;
    height: 3px;
    margin-left: -3px;
    border-radius: 2px;
    background-color: #74857d;
}
.app.active::after {
    width: 16px;
    margin-left: -8px;
    background-color: #0a74d0;
}
.task-search {
    display: flex;
    align-items: center;
    gap: 10px;
    width: 220px;
    height: 32px;
    padding: 0 5px 0 10px;
    border: 1px solid #b5d6c8;
    border-radius: 16px;
    background-color: #eef9f4;
    font-size: 14px;
}
.task-search input {
    flex: 1;
}
.task-search input::placeholder {
    color: #444;
    opacity: 1;
}
.dish {
    width: 44px;
    height: 26px;
}
.tray {
    display: flex;
    align-items: center;
    justify-self: end;
}
.tray-btn {
    width: 32px;
    height: 32px;
}
.ime {
    font-size: 15px;
}
.ime.wide {
    width: 44px;
}
.status-icons {
    gap: 9px;
    width: 52px;
}
.clock {
    min-width: 74px;
    justify-content: flex-end;
    text-align: right;
}
```
